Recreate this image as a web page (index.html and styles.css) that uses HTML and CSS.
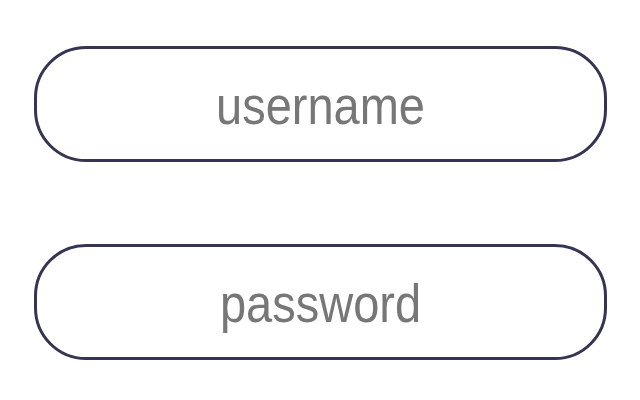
FILE: index.html
```html
<!DOCTYPE html>
<html lang="en">
<head>
  <meta charset="UTF-8" />
  <title>Login</title>
  <link rel="stylesheet" href="styles.css">
</head>
<body>
  <form class="login">
    <div class="field"><span class="label">username</span></div>
    <div class="field"><span class="label">password</span></div>
  </form>
</body>
</html>
```

FILE: styles.css
```css
html, body {
  margin: 0;
  height: 100%;
  background: #fff;
  font-family: "Liberation Sans", Arial, sans-serif;
}
.login {
  display: flex;
  flex-direction: column;
  gap: 82px;
  padding: 46px 33px 0 34px;
}
.field {
  height: 110px;
  border: 3px solid #353553;
  border-radius: 52px;
  display: flex;
  align-items: center;
  justify-content: center;
}
.label {
  color: #777;
  font-size: 47px;
  display: inline-block;
  transform: scaleY(1.14);
  margin-top: 3px;
}
```
